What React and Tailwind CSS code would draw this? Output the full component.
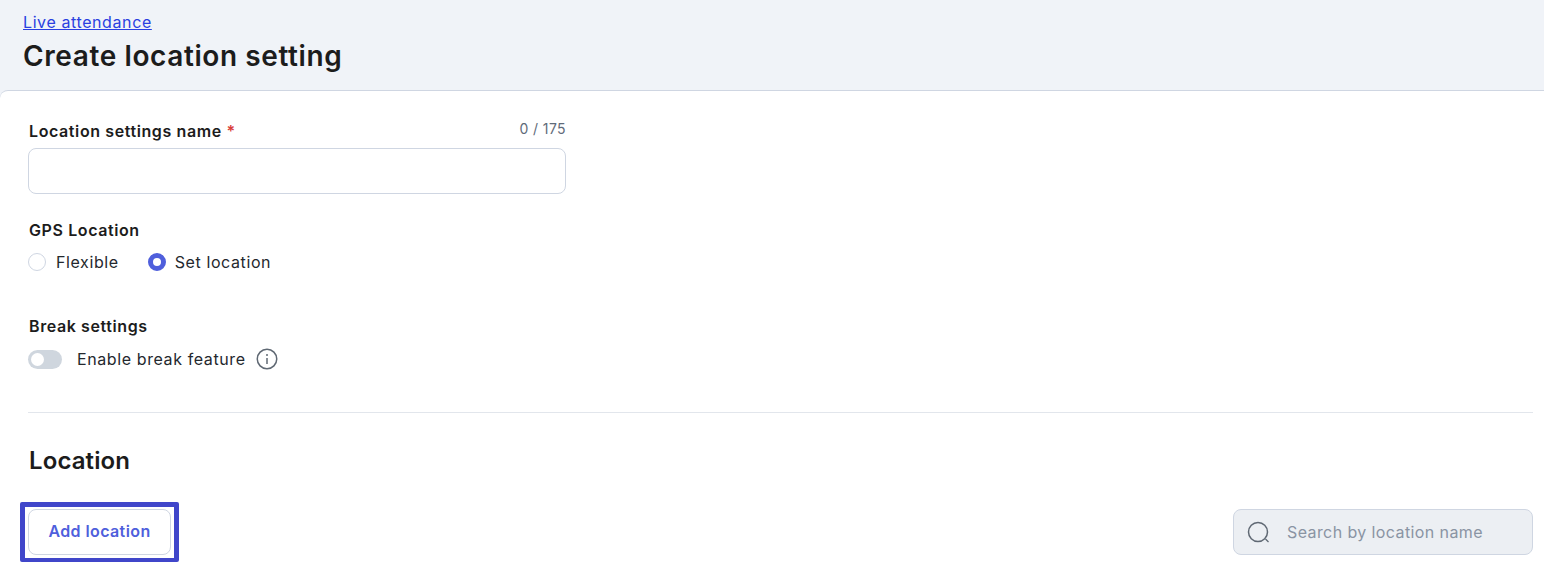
import { useState } from 'react';

const App = () => {
  const [name, setName] = useState('');

  return (
    <div className="h-[569px] overflow-hidden bg-[#f0f3f8] font-['Inter',sans-serif] text-[#1c1c1c]">
      {/* Page header */}
      <div className="h-[90px] pl-[23px] pt-[12px]">
        <a href="#" className="block text-[16px] leading-[20px] tracking-[0.6px] text-[#2a3fe0] underline">Live attendance</a>
        <h1 className="mt-[4px] text-[28px] leading-[40px] font-semibold tracking-[0.6px]">Create location setting</h1>
      </div>

      {/* Form card */}
      <div className="h-[479px] rounded-tl-[8px] border-t border-[#cfd6e2] bg-white pl-[28px] pr-[11px]">
        <div className="w-[538px] pt-[28px]">
          <div className="flex items-start justify-between">
            <label className="pl-px text-[16px] leading-[24px] font-semibold tracking-[0.6px]">
              Location settings name <span className="text-[#d9403a]">*</span>
            </label>
            <span className="text-[14px] leading-[20px] tracking-[0.4px] text-[#5f6b7a]">{name.length} / 175</span>
          </div>
          <input
            value={name}
            onChange={(e) => setName(e.target.value)}
            className="mt-[5px] block h-[46px] w-full rounded-[8px] border border-[#cfd6e2] bg-white px-3 outline-none"
          />
        </div>

        <div className="mt-[24px] pl-px text-[16px] leading-[24px] font-semibold tracking-[0.6px]">GPS Location</div>
        <div className="mt-[8px] flex items-center text-[16px] leading-[24px] tracking-[0.6px] text-[#24282e]">
          <span className="h-[18px] w-[18px] rounded-full border border-[#cfd6e2] bg-white"></span>
          <span className="ml-[10px]">Flexible</span>
          <span className="ml-[29px] h-[18px] w-[18px] rounded-full border-[5px] border-[#4f5fdc] bg-white"></span>
          <span className="ml-[9px]">Set location</span>
        </div>

        <div className="mt-[40px] pl-px text-[16px] leading-[24px] font-semibold tracking-[0.6px]">Break settings</div>
        <div className="mt-[9px] flex items-center text-[16px] leading-[24px] tracking-[0.6px] text-[#24282e]">
          <span className="flex h-[19px] w-[34px] items-center rounded-full bg-[#cfd6de] pl-[3px]">
            <span className="h-[13px] w-[13px] rounded-full bg-white"></span>
          </span>
          <span className="ml-[15px]">Enable break feature</span>
          <svg className="ml-[10px]" width="22" height="22" viewBox="0 0 22 22" fill="none">
            <circle cx="11" cy="11" r="9.75" stroke="#5f6873" strokeWidth="1.5" />
            <circle cx="11" cy="7" r="1" fill="#5f6873" />
            <path d="M11 10v6" stroke="#5f6873" strokeWidth="1.5" />
          </svg>
        </div>

        <div className="mt-[41px] h-px bg-[#e2e6ec]"></div>

        <h2 className="mt-[30px] pl-px text-[24px] leading-[36px] font-semibold tracking-[0.1px]">Location</h2>

        <div className="mt-[30px] flex items-start justify-between">
          <div className="relative">
            <button className="h-[46px] w-[143px] rounded-[8px] border border-[#cfd6e2] bg-white pb-[2px] text-[16px] font-semibold tracking-[0.4px] text-[#4f5fdc]">
              Add location
            </button>
            {/* Highlight drawn over the button */}
            <div className="absolute top-[-7px] left-[-8px] h-[60px] w-[159px] rounded-[2px] border-[5px] border-b-[4px] border-[#4046ca]"></div>
          </div>
          <div className="flex h-[46px] w-[300px] items-center rounded-[8px] border border-[#cfd6e2] bg-[#eceff3] pl-[13px]">
            <svg width="24" height="24" viewBox="0 0 24 24" fill="none">
              <circle cx="11" cy="12" r="9.5" stroke="#5f6873" strokeWidth="1.5" />
              <path d="M18.5 19l3 3" stroke="#5f6873" strokeWidth="1.25" />
            </svg>
            <span className="ml-[16px] text-[16px] tracking-[0.4px] text-[#8a94a3]">Search by location name</span>
          </div>
        </div>
      </div>
    </div>
  );
};

export default App;
